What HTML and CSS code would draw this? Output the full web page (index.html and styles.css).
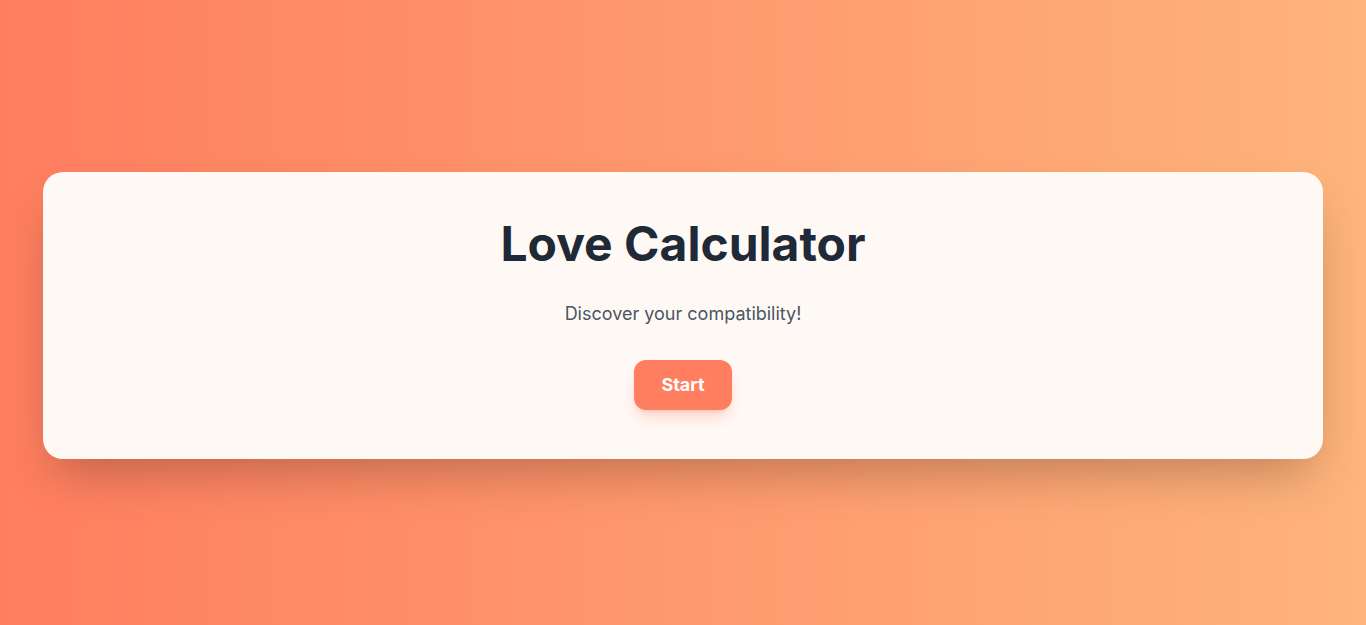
FILE: index.html
```html
<!DOCTYPE html>
<html lang="en">
<head>
<meta charset="utf-8">
<title>Love Calculator</title>
<link rel="stylesheet" href="styles.css">
</head>
<body>
<main class="page">
  <section class="card">
    <h1 class="title">Love Calculator</h1>
    <p class="subtitle">Discover your compatibility!</p>
    <button class="start-btn" type="button">Start</button>
  </section>
</main>
</body>
</html>
```
FILE: styles.css
```css
* { box-sizing: border-box; }
html, body { margin: 0; padding: 0; }
body {
  font-family: "Inter", "Noto Sans", sans-serif;
  background: linear-gradient(to right, #ff7e5f, #feb47b);
  min-height: 100vh;
}
.page {
  min-height: 100vh;
  display: flex;
  align-items: center;
  justify-content: center;
  padding-top: 6px;
}
.card {
  width: 1280px;
  max-width: 100%;
  background: #fff9f6;
  border-radius: 20px;
  padding: 48px 48px 49px;
  display: flex;
  flex-direction: column;
  align-items: center;
  box-shadow: 0 25px 50px -12px rgba(0, 0, 0, 0.25);
}
.title {
  margin: 0 0 32px;
  font-size: 48px;
  line-height: 48px;
  font-weight: 700;
  color: #1f2937;
}
.subtitle {
  margin: 0 0 32px;
  font-size: 18px;
  line-height: 28px;
  color: #4b5563;
}
.start-btn {
  font-family: inherit;
  font-size: 18px;
  line-height: 28px;
  font-weight: 700;
  color: #ffffff;
  background: #ff7e5f;
  border: none;
  border-radius: 12px;
  padding: 11px 27px;
  box-shadow: 0 10px 15px -3px rgba(255, 126, 95, 0.3), 0 4px 6px -4px rgba(255, 126, 95, 0.3);
  cursor: pointer;
}
```
